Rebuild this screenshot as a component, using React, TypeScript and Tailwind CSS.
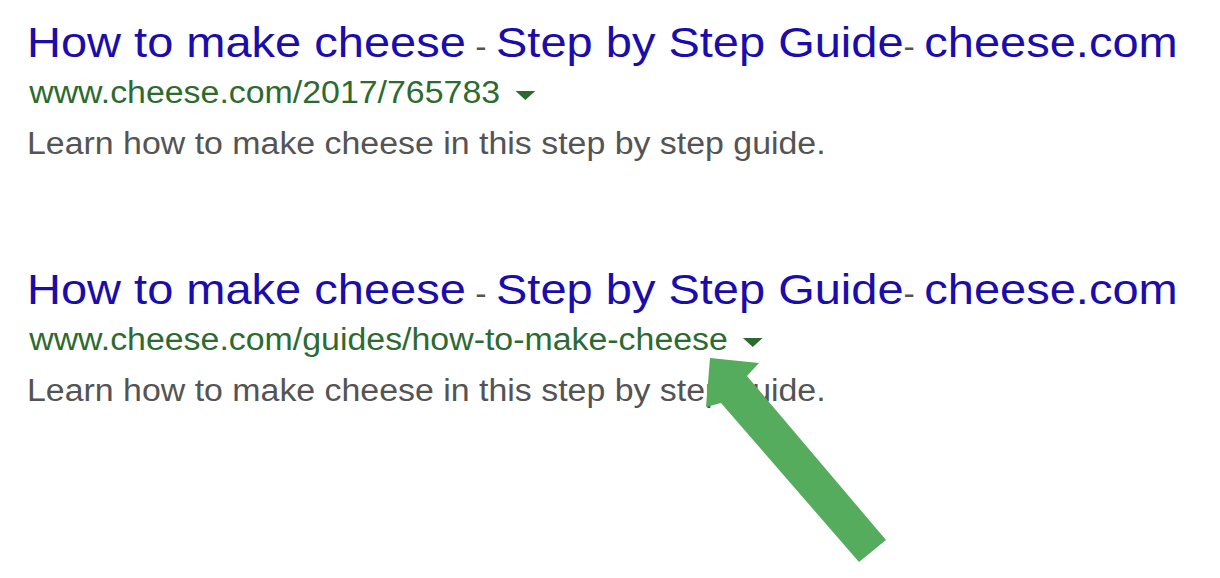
const results = [
  { url: "www.cheese.com/2017/765783" },
  { url: "www.cheese.com/guides/how-to-make-cheese" },
];

function Result({ url, className }: { url: string; className?: string }) {
  return (
    <div className={className}>
      <h3 className="text-[43px] leading-[48px] text-[#1a0dab] whitespace-nowrap">
        How to make cheese
        <span className="text-[31px] text-[#545454]"> - </span>
        Step by Step Guide
        <span className="text-[31px] text-[#545454]">- </span>
        cheese.com
      </h3>
      <div className="flex items-center mt-[2px] pl-[2px] text-[31px] leading-[40px] text-[#2c6b2f]">
        <span>{url}</span>
        <span className="ml-[14px] mt-[4px] w-0 h-0 border-l-[9px] border-r-[9px] border-t-[9px] border-l-transparent border-r-transparent border-t-[#2c6b2f]" />
      </div>
      <p className="mt-[11px] text-[31px] leading-[40px] text-[#545454]">
        Learn how to make cheese in this step by step guide.
      </p>
    </div>
  );
}

export default function App() {
  return (
    <div
      className="relative w-[1220px] h-[578px] bg-white overflow-hidden pl-[27px] pt-[18px]"
      style={{ fontFamily: '"Liberation Sans", Arial, sans-serif' }}
    >
      <div className="origin-left scale-x-[1.093]">
        <Result url={results[0].url} />
        <Result url={results[1].url} className="mt-[101px]" />
      </div>

      <svg className="absolute left-0 top-0" width="1220" height="578" viewBox="0 0 1220 578">
        <polygon
          points="710,358 759,363 747,376 886,540 859,562 721,403 706,407"
          fill="#55ac5c"
        />
      </svg>
    </div>
  );
}
